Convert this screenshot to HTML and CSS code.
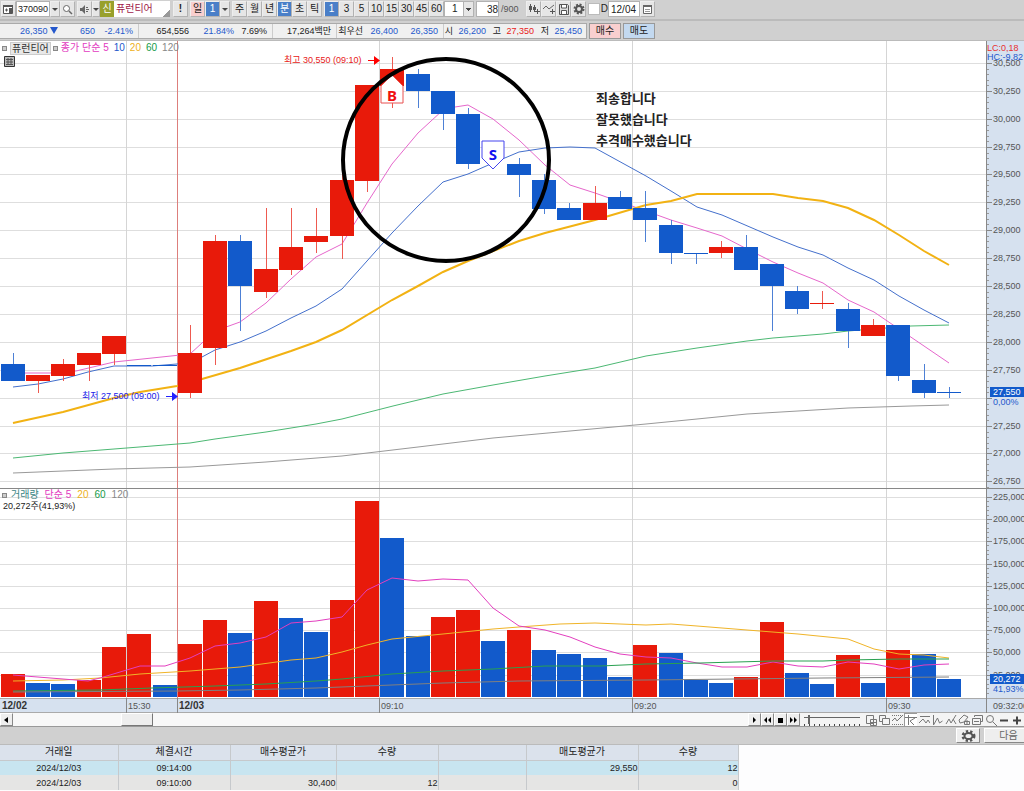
FILE: index.html
```html
<!DOCTYPE html>
<html lang="ko">
<head>
<meta charset="utf-8">
<title>퓨런티어 370090</title>
<link rel="stylesheet" href="styles.css">
</head>
<body>
<div class="toolbar">
  <button class="btn" aria-label="창"><svg width="11" height="11" viewBox="0 0 11 11"><path d="M.5 1.500h9v8h-9z" fill="#fff" stroke="#555"/><path d="M0 1h10v2H0zM6 4h3v5H6z" fill="#555"/><path d="M2 6h3M3.500 4.500v3" stroke="#555"/></svg></button>
  <input class="field code" aria-label="종목코드" value="370090">
  <button class="btn arrow" aria-label="종목 목록"></button>
  <button class="btn" aria-label="검색"><svg width="11" height="11" viewBox="0 0 11 11"><circle cx="4.500" cy="4.500" r="3" fill="#fff" stroke="#666"/><path d="M7 7l3 3" stroke="#666" stroke-width="1.500"/></svg></button>
  <button class="btn gap" aria-label="소리"><svg width="11" height="11" viewBox="0 0 11 11"><path d="M1 4h2l3-3v9L3 7H1z" fill="#666"/><path d="M7 3.500h2M7 5.500h3M7 7.500h2" stroke="#666"/></svg></button>
  <button class="btn arrow thin" aria-label="소리 설정"></button>
  <span class="badge">신</span><span class="stock">퓨런티어</span>
  <button class="btn bang">!</button>
  <button class="btn pink gap">일</button><button class="btn on">1</button><button class="btn arrow" aria-label="일 간격"></button>
  <button class="btn gap">주</button><button class="btn">월</button><button class="btn">년</button><button class="btn on">분</button><button class="btn">초</button><button class="btn">틱</button>
  <button class="btn on gap">1</button><button class="btn">3</button><button class="btn">5</button><button class="btn">10</button><button class="btn">15</button><button class="btn">30</button><button class="btn">45</button><button class="btn">60</button>
  <select class="field pick" aria-label="간격"><option>1</option></select>
  <input class="field count gap" aria-label="표시 개수" value="38"><span class="total">/900</span>
  <button class="btn" aria-label="봉 추가"><svg width="12" height="11" viewBox="0 0 12 11"><path d="M2.500 0v8M6.500 1v7" stroke="#555"/><path d="M1 2h3v4H1zM5 3h3v3H5z" fill="#555"/><path d="M9.500 5v5M7 7.500h5" stroke="#555"/></svg></button>
  <button class="btn" aria-label="지표 추가"><svg width="12" height="11" viewBox="0 0 12 11"><path d="M0 5l3-3 3 3 5-4" fill="none" stroke="#666"/><path d="M9.500 5v5M7 7.500h5" stroke="#555"/></svg></button>
  <button class="btn" aria-label="저장"><svg width="12" height="11" viewBox="0 0 12 11"><path d="M1.500.5h8l1 1v9h-9z" fill="#ddd" stroke="#555"/><path d="M3.500 1v3h5V1M3.500 10V6.500h5V10" fill="#fff" stroke="#555"/></svg></button>
  <button class="btn" aria-label="설정"><svg width="12" height="12" viewBox="0 0 12 12"><circle cx="6" cy="6" r="4.500" fill="none" stroke="#555" stroke-width="2" stroke-dasharray="2 1.530"/><circle cx="6" cy="6" r="3" fill="none" stroke="#555" stroke-width="2"/></svg></button>
  <label class="daily"><input type="checkbox" class="tick">D</label>
  <input class="field date" aria-label="날짜" value="12/04">
  <button class="btn" aria-label="달력"><svg width="11" height="11" viewBox="0 0 11 11"><path d="M1.500 1.500h8v8h-8z" fill="#fff" stroke="#666"/><path d="M1 1h9v2H1z" fill="#666"/><path d="M3 5.500h5M3 7.500h5" stroke="#999"/></svg></button>
</div>
<div class="quote">
  <div class="figures">
    <span class="down w-price">26,350 <i class="fall"></i></span><span class="down w-diff">650</span><span class="down w-rate">-2.41%</span>
    <span class="w-vol rule">654,556</span><span class="down w-turn">21.84%</span><span class="w-ratio">7.69%</span>
    <span class="w-money rule">17,264백만</span><span class="w-first rule">최우선</span><span class="down w-ask">26,400</span><span class="down w-bid">26,350</span>
    <span class="w-name rule">시</span><span class="down w-ohl">26,200</span><span class="w-name">고</span><span class="up w-ohl">27,350</span><span class="w-name">저</span><span class="down w-ohl">25,450</span>
  </div>
  <button class="trade buy">매수</button><button class="trade sell">매도</button>
</div>
<main class="charts">
  <section class="pane">
    <svg class="plot" id="price" viewBox="0 41 1024 447" role="img" aria-label="주가 차트"></svg>
    <div class="legend"><i class="dot"></i><span class="tag">퓨런티어</span><i class="dot"></i><span class="ma5">종가 단순 5</span><span class="ma10">10</span><span class="ma20">20</span><span class="ma60">60</span><span class="ma120">120</span></div>
    <button class="grid-btn" aria-label="표 보기"><svg width="11" height="11" viewBox="0 0 11 11"><path d="M.5.5h10v10H.5z" fill="#bbb" stroke="#333"/><path d="M2 3.500h7M2 6h7M2 8.500h7M4 2v7M7 2v7" stroke="#555"/></svg></button>
  </section>
  <section class="pane">
    <svg class="plot" id="volume" viewBox="0 488 1024 225" role="img" aria-label="거래량 차트"></svg>
    <div class="legend low"><i class="dot"></i><span class="vol">거래량</span><span class="ma5">단순 5</span><span class="ma20">20</span><span class="ma60">60</span><span class="ma120">120</span></div>
    <div class="reading">20,272주(41,93%)</div>
  </section>
</main>
<div class="scroll">
  <button class="step" aria-label="이전"><svg width="9" height="8" viewBox="0 0 9 8"><path d="M6 1v6L2 4z"/></svg></button>
  <div class="track"><div class="thumb"></div></div>
  <button class="step" aria-label="다음 봉"><svg width="9" height="8" viewBox="0 0 9 8"><path d="M3 1l3 3-3 3z"/></svg></button>
  <button class="step" aria-label="빨리 뒤로"><svg width="9" height="8" viewBox="0 0 9 8"><path d="M4 1v6L1 4zM8 1v6L5 4z"/></svg></button>
  <button class="step" aria-label="정지"><svg width="9" height="8" viewBox="0 0 9 8"><path d="M2 2h5v5H2z"/></svg></button>
  <button class="step" aria-label="빨리 앞으로"><svg width="9" height="8" viewBox="0 0 9 8"><path d="M1 1v6l3-3zM5 1v6l3-3z"/></svg></button>
  <input class="speed" type="range" value="8" aria-label="속도">
  <div class="tools">
    <button aria-label="창 추가"><svg viewBox="0 0 12 12"><path d="M1.500 1.500h7v8h-7zM5.500 5.500h6v6h-6zM8.500 6v5M6 8.500h5"/></svg></button>
    <button aria-label="창 겹치기"><svg viewBox="0 0 12 12"><path d="M1.500 1.500h6v6h-6z"/><path d="M4.500 4.500h7v6h-7z" fill="#f4f4f4"/></svg></button>
    <button aria-label="점선"><svg viewBox="0 0 12 12"><path d="M1 1.500h11M1 10.500h11" stroke-dasharray="1 1"/><path d="M1 7l3-3 2 3 5-5"/></svg></button>
    <button class="pressed" aria-label="가격선"><svg viewBox="0 0 12 12"><path d="M3.500 1v10M0 3.500h12M10 4L5 7l4 4"/></svg></button>
    <button aria-label="추세선"><svg viewBox="0 0 12 12"><path d="M2 2.500h10M1 9l4-4 3 4 2-3 2 3"/></svg></button>
    <button aria-label="파동"><svg viewBox="0 0 12 12"><path d="M2.500 1v10l4-7 2 5 3-2"/></svg></button>
    <button aria-label="그리기"><svg viewBox="0 0 12 12"><path d="M1 10l3-5 2 4 5-8M8 5l3 5"/></svg></button>
    <button aria-label="지우개"><svg viewBox="0 0 12 12"><path d="M1 6l5-5 4 2-4 5-4 1zM6.500 7.500h5v3h-5zM9 6v5"/></svg></button>
    <button aria-label="전체 지우기"><svg viewBox="0 0 12 12"><path d="M3.500 3V1.500h8v6H10M1.500 4.500h8v6h-8zM3 7.500h5"/></svg></button>
    <button aria-label="돋보기"><svg viewBox="0 0 12 12"><circle cx="5" cy="5" r="3.500"/><path d="M8 8l4 4"/></svg></button>
    <button aria-label="축소"><svg class="bold" viewBox="0 0 12 12"><path d="M2 6.500h8"/></svg></button>
    <button aria-label="확대"><svg class="bold" viewBox="0 0 12 12"><path d="M2 6.500h8M6 2.500v8"/></svg></button>
  </div>
</div>
<div class="actions">
  <button class="gear" aria-label="설정"><svg width="15" height="12" viewBox="0 0 15 12"><ellipse cx="7.500" cy="6" rx="5.500" ry="4.500" fill="none" stroke="#555" stroke-width="3" stroke-dasharray="2.200 1.900"/><ellipse cx="7.500" cy="6" rx="4" ry="3" fill="#eee" stroke="#555" stroke-width="2"/></svg></button>
  <button class="next">다음</button>
</div>
<table class="trades">
  <colgroup><col class="c1"><col class="c2"><col class="c3"><col class="c4"><col class="c5"><col class="c6"><col class="c7"></colgroup>
  <thead><tr><th>거래일</th><th>체결시간</th><th>매수평균가</th><th>수량</th><th></th><th>매도평균가</th><th>수량</th></tr></thead>
  <tbody>
    <tr class="hot"><td>2024/12/03</td><td>09:14:00</td><td></td><td></td><td></td><td>29,550</td><td>12</td></tr>
    <tr><td>2024/12/03</td><td>09:10:00</td><td>30,400</td><td>12</td><td></td><td></td><td>0</td></tr>
  </tbody>
</table>
<script src="chart.js"></script>
</body>
</html>
```

FILE: styles.css
```css
* { box-sizing: border-box; }
body {
  margin: 0;
  background: #fdfdfe;
  color: #222;
  font: 10px/14px "Liberation Sans", "Noto Sans CJK KR", sans-serif;
  overflow-x: hidden;
}
button, input, select { font: inherit; color: inherit; margin: 0; padding: 0; border-radius: 0; }
svg { display: block; }

.toolbar {
  display: flex;
  align-items: center;
  height: 21px;
  padding: 0 1px 1px;
  background: #d0d0d0;
  border-bottom: 2px solid #bbb;
  white-space: nowrap;
}
.btn {
  display: flex;
  flex: none;
  align-items: center;
  justify-content: center;
  width: 15px;
  height: 16px;
  border: 1px solid #b2b2b2;
  border-top-color: #eee;
  border-left-color: #eee;
  background: #e6e6e6;
}
.btn.gap, .field.gap { margin-left: 2px; }
.btn.on { background: #4a7fc8; color: #fff; }
.btn.pink { background: #f9cfcf; }
.btn.arrow { width: 10px; }
.btn.thin { width: 8px; }
.arrow::before { content: ""; border: 3px solid transparent; border-top-color: #444; border-bottom: 0; }
.bang { margin-left: 3px; font-weight: bold; }
.field { flex: none; height: 16px; border: 1px solid #b2b2b2; background: #fff; }
.code { width: 34px; padding-left: 1px; font-size: 9px; }
.badge { width: 14px; height: 16px; line-height: 16px; background: #98a02c; color: #fff; text-align: center; }
.stock {
  width: 56px;
  height: 16px;
  line-height: 16px;
  padding-left: 2px;
  background: linear-gradient(135deg, transparent 90%, #999 90%) right bottom, #fff;
  color: #a01848;
}
.pick {
  width: 30px;
  padding-left: 7px;
  appearance: none;
  background: linear-gradient(#444, #444) 21px 6px / 5px 1px no-repeat, linear-gradient(#444, #444) 22px 7px / 3px 1px no-repeat, linear-gradient(#444, #444) 23px 8px / 1px 1px no-repeat, linear-gradient(90deg, transparent 18px, #b2b2b2 18px, #b2b2b2 19px, #e6e6e6 19px) #fff;
}
.count { width: 23px; text-align: right; }
.total { width: 27px; padding-left: 2px; color: #555; font-size: 9px; }
.daily { display: flex; align-items: center; gap: 1px; width: 20px; margin-left: 2px; }
.tick { width: 12px; height: 12px; appearance: none; background: #fff; border: 1px solid #bbb; }
.date { width: 32px; padding-left: 2px; }

.quote { display: flex; align-items: center; gap: 2px; height: 20px; background: #d0d0d0; border-bottom: 1px solid #bbb; white-space: nowrap; }
.figures {
  display: flex;
  flex: none;
  gap: 5px;
  width: 587px;
  height: 16px;
  background: #f0f0f0;
  border: 1px solid #aaa;
  border-left: 0;
  font-size: 9px;
}
.figures span { flex: none; text-align: right; }
.figures .rule { border-left: 1px solid #ccc; }
.fall { display: inline-block; border: 4px solid transparent; border-top: 7px solid #2458cc; border-bottom: 0; }
.w-price { width: 58px; }
.w-diff { width: 32px; }
.w-rate { width: 33px; }
.w-vol { width: 51px; }
.w-turn { width: 40px; }
.w-ratio { width: 28px; }
.w-money { width: 59px; }
.w-first { width: 27px; }
.w-ask { width: 30px; }
.w-bid { width: 35px; }
.w-name { width: 10px; }
.w-ohl { width: 28px; }
.up { color: #e82020; }
.down { color: #2458cc; }
.trade { width: 32px; height: 16px; border: 1px solid #999; line-height: 12px; }
.trade.buy { background: #f9cfcf; }
.trade.sell { background: #c3d9f0; }

.pane { position: relative; }
.plot { width: 100%; height: auto; background: #fff; font-size: 9px; }
.legend { position: absolute; top: 0; left: 2px; display: flex; align-items: center; gap: 5px; }
.legend.low { gap: 6px; }
.dot { width: 5px; height: 5px; margin-right: -2px; border: 1px solid #888; background: #ccc; }
.tag { padding: 0 1px; background: #e8e8e8; border: 1px solid #ccc; line-height: 11px; color: #333; margin-right: -3px; }
.vol { color: #3a8585; }
.ma5 { color: #e23ac0; }
.ma10 { color: #2458cc; }
.ma20 { color: #eeb020; }
.ma60 { color: #159a48; }
.ma120 { color: #888; }
.grid-btn { position: absolute; top: 15px; left: 4px; border: 0; background: none; }
.reading { position: absolute; top: 11px; left: 3px; font-size: 9px; }

.scroll { display: flex; height: 14px; background: #f4f4f4; border-bottom: 1px solid #999; }
.step {
  display: flex;
  align-items: center;
  justify-content: center;
  width: 13px;
  border: 1px solid #888;
  border-top-color: #fff;
  border-left-color: #fff;
  background: #eee;
}
.track { flex: 1; display: flex; background: #f8f8f8; }
.thumb { width: 32px; margin-left: calc(15% - 2px); background: #eee; border: 1px solid #777; border-top-color: #fff; border-left-color: #fff; }
.speed {
  width: 56px;
  margin: 0 4px;
  appearance: none;
  background: linear-gradient(#666, #666) 0 4px / 100% 1px no-repeat, repeating-linear-gradient(90deg, #444 0 1px, transparent 1px 5px) 0 11px / 100% 2px no-repeat;
}
.speed::-webkit-slider-thumb { appearance: none; width: 2px; height: 9px; background: #666; }
.tools { display: flex; width: 160px; }
.tools button { flex: 1; display: flex; align-items: center; justify-content: center; border: 0; background: none; }
.tools .pressed { background: #fff; box-shadow: inset 1px 1px #999; }
.tools svg { width: 12px; height: 12px; fill: none; stroke: #777; }
.tools .bold { stroke: #444; stroke-width: 2; }

.actions { display: flex; justify-content: flex-end; gap: 4px; height: 18px; background: #d0d0d0; border-bottom: 1px solid #bbb; padding: 1px 0; }
.gear, .next { display: flex; align-items: center; justify-content: center; border: 1px solid #888; border-top-color: #fff; border-left-color: #fff; background: #eee; }
.gear { width: 24px; }
.next { width: 40px; border-right: 0; padding-left: 8px; color: #666; }

.trades { table-layout: fixed; width: 738px; border-collapse: collapse; line-height: 14px; }
.trades th, .trades td { height: 15px; padding: 0; border-right: 1px solid #c6c9cc; font-weight: normal; text-align: right; }
.trades th { background: #dbe2ec; border-bottom: 1px solid #c6c9cc; text-align: center; }
.trades td { background: #e5e5e4; font-size: 9px; }
.trades .hot td { background: #c8e5f0; }
.trades td:nth-child(-n+2) { text-align: center; }
.c1 { width: 118px; }
.c2 { width: 112px; }
.c3 { width: 106px; }
.c4 { width: 102px; }
.c5 { width: 88px; }
.c6 { width: 112px; }
.c7 { width: 100px; }

.axis { fill: #555; }
.day { fill: #333; font-size: 10px; font-weight: bold; }
.note { font-size: 13px; font-weight: 600; fill: #222; }
.mark { font: bold 15px "Noto Sans", sans-serif; text-anchor: middle; }
```

FILE: chart.js
```javascript
const RED = '#e81a0a', BLUE = '#125acb';
// colour, body top, body bottom, high, low
const candles = [
  ['B',364,381,353,381],['R',375,381,375,393],['R',364,376,359,381],['R',353,365,353,381],['R',336,354,336,365],
  ['B',365,365,365,365],['B',365,365,365,365],['R',353,393,325,398],['R',241,348,235,365],['B',241,286,235,331],
  ['R',269,292,208,298],['R',247,270,208,275],['R',236,242,208,253],['R',180,236,174,259],['R',85,181,85,192],
  ['R',69,86,57,108],['B',74,91,69,108],['B',91,114,91,130],['B',114,164,108,169],null,
  ['B',164,175,158,197],['B',180,209,174,214],['B',208,220,203,220],['R',203,220,186,220],['B',197,209,191,209],
  ['B',208,220,191,242],['B',225,253,220,264],['B',253,253,253,264],['R',247,253,241,258],['B',247,270,235,270],
  ['B',264,286,264,331],['B',291,309,286,314],['R',303,303,291,309],['B',309,331,303,348],['R',325,336,319,336],
  ['B',325,376,325,381],['B',380,393,364,398],['B',392,392,387,398]
];
const volumes = [674,683,684,680,647,634,685,644,620,633,601,618,632,600,501,538,636,617,610,641,630,650,654,658,677,645,653,680,683,677,622,673,684,655,683,650,654,679];
const volumeColours = 'RBBRRRBRRBRBBRRBBRRBRBBBBRBBBRRBBRBRBB';
const priceLines = [
  ['#e667cc',1,'13,373 50,373 76,371 114,362 152,358 190,354 215,331 240,322 266,303 291,279 316,257 342,244 367,203 392,164 418,133 443,110 455,107 468,105 493,119 519,140 545,165 570,185 595,193 646,211 671,220 697,228 722,236 747,249 773,262 798,273 823,283 848,300 874,312 899,329 949,363'],
  ['#4470cc',1,'13,387 38,384 63,379 88,372 114,366 152,366 177,364 202,357 215,350 240,342 266,331 291,318 316,306 342,289 392,233 418,206 443,182 468,174 493,163 519,152 545,148 570,147 595,148 646,176 671,191 697,207 722,215 773,237 798,247 823,255 848,268 874,280 899,296 924,310 949,323'],
  ['#f2b213',2,'13,423 63,412 114,398 140,392 177,386 202,379 240,368 291,351 316,342 342,330 392,300 418,286 443,272 468,261 519,241 545,233 595,220 646,205 671,201 697,194 773,194 798,198 823,201 848,208 874,220 899,235 924,251 949,265'],
  ['#4cb873',1,'13,458 63,453 114,449 190,443 215,439 266,432 316,424 342,419 393,406 443,394 493,385 545,376 595,368 646,356 697,348 747,341 773,338 823,334 848,331 886,328 911,326 949,325'],
  ['#999999',1,'13,473 114,469 190,467 266,462 342,456 418,447 493,438 570,431 646,424 697,419 747,414 798,411 848,408 911,406 949,405']
];
const volumeLines = [
  ['#f0b428','13,681 63,680 100,678 140,674 190,671 240,667 291,660 316,658 342,652 367,645 392,639 443,634 493,629 519,627 560,624 595,623 620,624 646,625 671,624 697,626 747,630 798,634 848,639 874,649 899,654 924,655 949,658'],
  ['#e33fbf','13,675 25,676 63,679 88,681 100,678 140,666 165,666 190,658 215,646 240,643 266,637 291,623 316,621 342,617 367,590 392,578 418,581 443,579 468,580 493,608 519,626 545,630 570,637 595,647 620,654 646,657 671,658 697,663 722,667 747,667 773,662 798,666 823,667 848,662 874,664 899,669 924,665 949,664'],
  ['#29a050','13,691 100,690 152,688 215,686 266,684 316,681 342,679 392,674 443,671 493,669 545,666 600,666 646,664 700,663 773,661 823,661 848,660 900,659 949,659'],
  ['#808080','13,692 177,691 240,690 316,688 392,685 443,683 519,681 646,680 735,679 823,678 949,677']
];
const rect = (x, y, w, h, fill) => `<rect x="${x}" y="${y}" width="${w}" height="${h}" fill="${fill}"/>`;
const text = (x, y, s, cls, fill) => `<text x="${x}" y="${y}" class="${cls}"${fill ? ` fill="${fill}"` : ''}>${s}</text>`;
const line = (colour, width, points) => `<polyline points="${points}" fill="none" stroke="${colour}" stroke-width="${width}"/>`;
const left = i => Math.floor(1.2 + 25.3 * i);
const columns = (top, height) => [126, 379, 632, 886].map(x => rect(x, top, 1, height, '#d5d5d5')).join('')
  + rect(177, top, 1, height, '#dd7f7c') + rect(986, top, 38, height, '#d6e1ef') + rect(986, top, 1, height, '#888');

let out = '', labels = '';
for (let k = 0; k < 16; k++) {
  const y = Math.round(62.8 + 27.9 * k), value = 30500 - 250 * k;
  out += rect(0, y, 986, 1, '#dedede');
  labels += rect(987, y, 5, 1, '#888');
  // the last-price tag takes the place of this label
  if (value !== 27500) labels += text(993, y + 3, value.toLocaleString('en-US'), 'axis');
  for (let m = 1; m < 5; m++) labels += rect(987, Math.round(y + m * 5.6), 2, 1, '#999');
}
out += columns(41, 447) + labels;
out += priceLines.map(l => line(...l)).join('');
candles.forEach((c, i) => {
  if (!c) return;
  const [k, top, bottom, high, low] = c, x = left(i), fill = k === 'R' ? RED : BLUE;
  if (low > high) out += rect(x + 12, high, 1, low - high, k === 'R' ? '#ee5a50' : '#4d80d5');
  out += rect(x, top, 24, Math.max(1, bottom - top), fill);
});
out += rect(987, 41, 37, 19, '#d6e1ef') + text(987, 51, 'LC:0,18', '', '#e83030') + text(987, 60, 'HC:-9,82', '', '#2458cc');
out += rect(990, 387, 34, 10, BLUE) + text(993, 395, '27,550', '', '#fff') + text(993, 405, '0,00%', '', '#2458cc');
out += text(284, 63, '최고 30,550 (09:10)', '', '#e82020') + `<path d="M368 60h6v-4l6 4.500-6 4.500v-4h-6z" fill="#f00"/>`;
out += text(82, 399, '최저 27,500 (09:00)', '', '#2020e8') + `<path d="M166 396h6v-4l6 4.500-6 4.500v-4h-6z" fill="#22f"/>`;
out += `<path d="M392 75l11 11v17h-22V86z" fill="#fff" stroke="#e85050"/>` + text(392, 101, 'B', 'mark', '#f01010');
out += `<path d="M482 141h22v17l-11 11-11-11z" fill="#fff" stroke="#4444ee"/>` + text(493, 160, 'S', 'mark', '#1010f0');
out += '<ellipse cx="446" cy="160" rx="103" ry="101" fill="none" stroke="#000" stroke-width="4"/>';
out += text(596, 103, '죄송합니다', 'note') + text(596, 124, '잘못했습니다', 'note') + text(596, 145, '추격매수했습니다', 'note');
document.getElementById('price').innerHTML = out;

out = ''; labels = '';
for (let k = 0; k < 9; k++) {
  const y = Math.round(497 + 22.2 * k);
  out += rect(0, y, 986, 1, '#dedede');
  labels += rect(987, y, 5, 1, '#888') + text(993, y + 3, (225000 - 25000 * k).toLocaleString('en-US'), 'axis');
  for (let m = 1; m < 5; m++) labels += rect(987, Math.round(y + m * 4.4), 2, 1, '#999');
}
out += columns(488, 210) + labels + rect(0, 488, 1024, 1, '#888');
volumes.forEach((y, i) => { out += rect(left(i), y, 24, 697 - y, volumeColours[i] === 'R' ? RED : BLUE); });
out += volumeLines.map(l => line(l[0], 1, l[1])).join('');
out += rect(990, 674, 34, 10, BLUE) + text(993, 682, '20,272', '', '#fff') + text(993, 692, '41,93%', '', '#2458cc');
out += rect(0, 698, 1024, 15, '#d6e1ef') + rect(0, 698, 1024, 1, '#aaa') + rect(0, 712, 1024, 1, '#aaa');
out += [126, 177, 379, 632, 886, 986].map(x => rect(x, 698, 1, 15, '#888')).join('');
out += text(2, 709, '12/02', 'day') + text(128, 709, '15:30', 'axis') + text(179, 709, '12/03', 'day') + text(381, 709, '09:10', 'axis')
  + text(634, 709, '09:20', 'axis') + text(888, 709, '09:30', 'axis') + text(993, 709, '09:32:00', 'axis');
document.getElementById('volume').innerHTML = out;
```
